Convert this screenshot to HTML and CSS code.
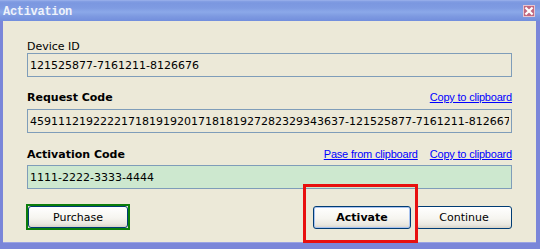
FILE: index.html
```html
<!DOCTYPE html>
<html lang="en">

<head>
  <meta charset="UTF-8">
  <title>Activation</title>
  <link rel="stylesheet" href="styles.css">
</head>

<body>

  <!-- Activation dialog -->
  <div class="window">
    <div class="titlebar">
      <span class="title">Activation</span>
      <span class="close">
        <svg width="12" height="12" viewBox="0 0 12 12">
          <path d="M3.2 3.2 L8.8 8.8 M8.8 3.2 L3.2 8.8" stroke="#fff" stroke-width="2.2" stroke-linecap="square" />
        </svg>
      </span>
    </div>

    <div class="frame">
      <div class="field field-device">
        <div class="label-row">
          <label for="device">Device ID</label>
        </div>
        <input type="text" id="device" class="box" value="121525877-7161211-8126676" readonly>
      </div>

      <div class="field field-request">
        <div class="label-row">
          <label for="request" class="strong">Request Code</label>
          <div class="links">
            <a href="#">Copy to clipboard</a>
          </div>
        </div>
        <input type="text" id="request" class="box" value="459111219222217181919201718181927282329343637-121525877-7161211-8126676" readonly>
      </div>

      <div class="field field-activation">
        <div class="label-row">
          <label for="activation" class="strong">Activation Code</label>
          <div class="links">
            <a href="#">Pase from clipboard</a>
            <a href="#">Copy to clipboard</a>
          </div>
        </div>
        <input type="text" id="activation" class="box box-green" value="1111-2222-3333-4444" readonly>
      </div>

      <div class="actions">
        <div class="focus-ring">
          <button class="btn btn-purchase">Purchase</button>
        </div>
        <button class="btn btn-activate">Activate</button>
        <button class="btn btn-continue">Continue</button>
      </div>
    </div>

    <div class="highlight"></div>
  </div>

</body>

</html>
```

FILE: styles.css
```css
html,
body {
  margin: 0;
  padding: 0;
  background: #ece9d8;
}

.window {
  position: relative;
  width: 540px;
  height: 249px;
  display: flex;
  flex-direction: column;
  font-family: "DejaVu Sans", Verdana, sans-serif;
  font-size: 11px;
  color: #000;
}

.titlebar {
  height: 21px;
  flex: none;
  display: flex;
  align-items: flex-start;
  justify-content: space-between;
  padding: 0 5px 0 3px;
  background: linear-gradient(#a2b7ee 0, #86a0e4 1px, #7b97e0 3px, #7f9be2 8px, #8ba8e9 12px, #7e9ae1 16px, #728edd 21px);
}

.title {
  margin-top: 6px;
  font-family: "Liberation Mono", "DejaVu Sans Mono", monospace;
  font-weight: bold;
  font-size: 12px;
  line-height: 12px;
  letter-spacing: -0.3px;
  color: #eef2fb;
}

.close {
  margin-top: 5px;
  width: 12px;
  height: 12px;
  box-sizing: border-box;
  background: #c1687f;
  border: 1px solid #e6c4cf;
  display: flex;
  align-items: center;
  justify-content: center;
}

.close svg {
  display: block;
  margin: -1px;
}

.frame {
  flex: 1;
  background: #ece9d8;
  border-style: solid;
  border-color: #7a86d9;
  border-width: 0 4px 6px 3px;
  padding: 0 24px;
  box-shadow: inset 0 -1px 0 #9aa3e3;
}

.field {
  display: flex;
  flex-direction: column;
}

.field-device {
  margin-top: 18px;
}

.field-request {
  margin-top: 13px;
}

.field-activation {
  margin-top: 14px;
}

.label-row {
  display: flex;
  justify-content: space-between;
  align-items: baseline;
  line-height: 13px;
  padding-top: 1px;
}

.label-row label.strong {
  font-weight: bold;
}

.field-request .label-row {
  margin-bottom: 5px;
}

.field-activation .label-row {
  margin-bottom: 4px;
}

.links {
  display: flex;
  gap: 12px;
}

.links a {
  font-family: "Liberation Sans", Arial, sans-serif;
  font-size: 11px;
  letter-spacing: -0.2px;
  color: #0000ff;
  text-decoration: underline;
}

.box {
  display: block;
  width: 100%;
  height: 24px;
  box-sizing: border-box;
  margin: 0;
  padding: 0 2px;
  border: 1px solid #7f9db9;
  background: #ece9d8;
  font-family: "DejaVu Sans", Verdana, sans-serif;
  font-size: 11px;
  color: #000;
  outline: 0;
}

.box-green {
  background: #cde8cf;
}

.actions {
  margin-top: 15px;
  display: flex;
  align-items: center;
}

.focus-ring {
  margin-left: -1px;
  border: 2px solid #0b7d0b;
  display: flex;
}

.btn {
  margin: 0;
  padding: 0;
  height: 23px;
  box-sizing: border-box;
  border: 1px solid #003c74;
  border-radius: 3px;
  background: linear-gradient(#ffffff, #f6f5f0 55%, #e9e7df 85%, #d7d2c6);
  font-family: "DejaVu Sans", Verdana, sans-serif;
  font-size: 11px;
  color: #000;
}

.btn-purchase {
  width: 100px;
  height: 22px;
}

.btn-activate {
  margin-left: auto;
  width: 98px;
  font-weight: bold;
  box-shadow: inset 0 0 0 1px #a9c3ef;
}

.btn-continue {
  margin-left: 5px;
  width: 96px;
}

/* red annotation box drawn over the dialog */
.highlight {
  position: absolute;
  left: 303px;
  top: 184px;
  width: 115px;
  height: 59px;
  box-sizing: border-box;
  border: 3px solid #e8100f;
}
```
